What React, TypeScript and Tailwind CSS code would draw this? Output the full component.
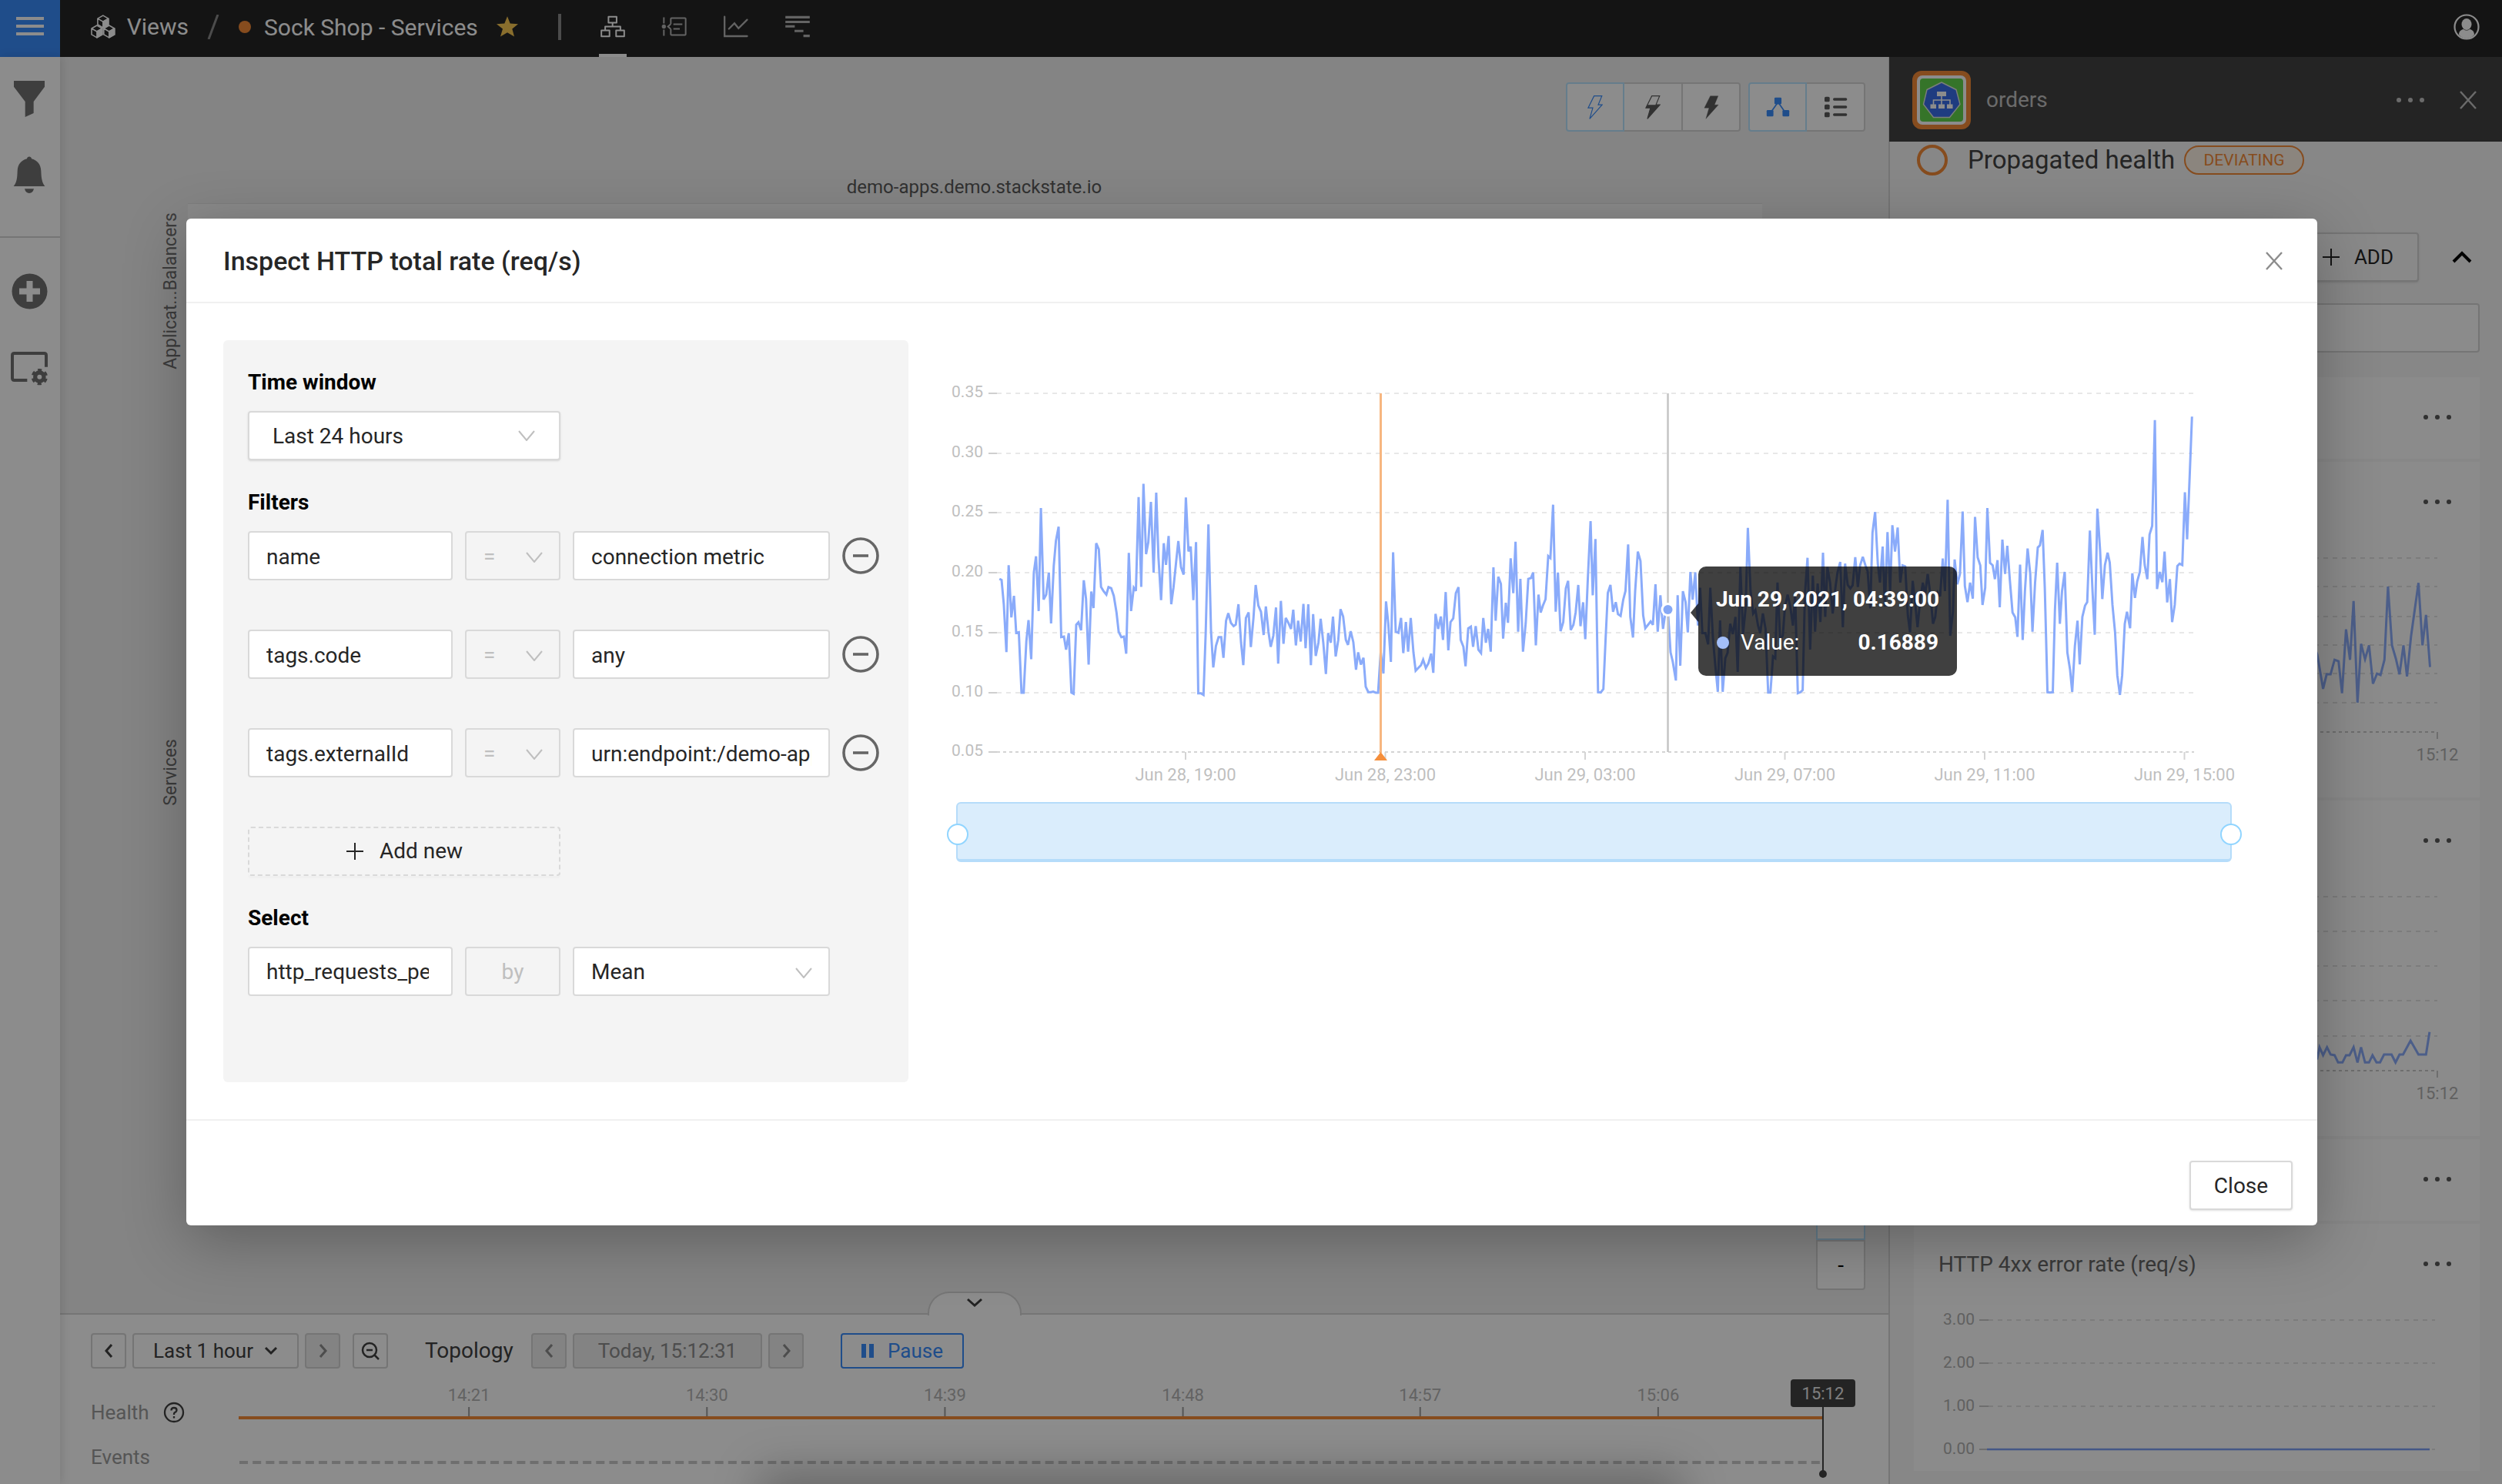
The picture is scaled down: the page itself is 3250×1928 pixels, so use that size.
import type { ReactNode } from "react";

type Transform = { sx: number; sy: number; dx: number; dy: number };

/** Turns a flat "x,y x,y" sample list into an SVG polyline string in chart space. */
function plot(samples: string, t: Transform): string {
  return samples
    .trim()
    .split(/\s+/)
    .map((pair) => {
      const [x, y] = pair.split(",").map(Number);
      return `${(x * t.sx + t.dx).toFixed(1)},${(y * t.sy + t.dy).toFixed(1)}`;
    })
    .join(" ");
}

const RATE_FIRST_HALF = `171,818 176,822 181,910 187,1084 192,768 198,958 204,880 209,1014 215,1012 221,1232 226,1232 232,1045 237,968 243,1110 249,795 254,736 260,935 265,560 271,893 277,875 283,795 288,980 294,770 299,680 305,628 311,1030 317,1028 322,1075 328,1015 334,1232 339,1236 345,985 350,976 356,1005 362,823 367,890 373,1130 379,864 384,924 390,688 396,710 401,847 407,863 413,875 418,848 424,852 430,880 436,940 441,1010 447,1030 453,1028 458,1090 464,723 469,935 475,850 480,862 486,520 492,847 497,472 503,728 508,685 514,538 520,795 526,504 531,740 537,895 543,688 548,767 554,662 560,910 565,850 571,755 576,680 582,775 588,802 593,522 599,718 604,700 610,895 616,684 621,1234 627,1234 633,1240 638,1010 644,620 650,1010 655,1140 661,1062 667,1030 673,1030 678,1105 684,970 689,943 695,978 701,990 706,984 712,910 718,1050 723,1132 729,960 735,940 740,1066 746,960 751,840 757,915 763,938 769,1022 774,918 780,1010 785,1065 791,1025 797,922 802,1126 808,898 814,1054 819,960 825,978 831,1000 836,930 842,1060 847,970 853,1046 859,909 864,1070 870,910 876,1132 881,946 887,1098 893,1050 898,963 904,1050 910,1164 915,1015 921,1050 926,955 932,1100 938,1040 943,928 949,955 955,1040 960,1058 966,1008 972,1048 978,1148 983,1085 989,1130 995,1105 1000,1210 1006,1230 1012,1230 1017,1228 1023,1232 1028,1232 1034,1084 1040,1162 1046,900 1051,980 1057,1120 1062,721 1068,1010 1074,1014 1080,960 1085,1088 1091,975 1096,1083 1102,960 1108,1085 1113,1152 1119,1142 1125,1132 1130,1112 1136,1142 1142,1125 1148,1090 1153,1160 1158,945 1164,1000 1170,955 1175,1040 1181,866 1187,1078 1192,975 1198,962 1204,870 1210,848 1215,1040 1221,1065 1226,1136 1232,998 1238,992 1243,1065 1249,990 1255,1076 1261,1088 1266,960 1272,1050 1277,1000 1283,1083 1289,776 1294,970 1300,810 1306,836 1311,1035 1317,905 1322,978 1328,743 1334,870 1339,683 1345,1010 1350,818 1356,1083 1362,980 1368,818 1374,815 1379,795 1385,1060 1391,875 1396,940 1401,915 1407,892 1413,735 1418,742 1424,548 1430,937 1435,795 1441,1008 1447,975 1453,852 1458,825 1464,1004 1470,985 1475,940 1481,840 1486,990 1492,903`;

const RATE_SECOND_HALF = `16,830 22,650 28,486 33,702 39,538 45,984 51,985 57,975 62,830 67,695 73,672 79,750 85,722 90,757 96,762 102,715 107,690 113,554 118,765 124,825 129,690 135,575 141,602 147,760 152,798 158,788 164,778 169,788 175,670 180,808 186,702 192,800 197,755 203,744 209,868 214,895 221,950 225,702 231,907 237,690 243,722 248,810 254,634 259,715 265,635 271,790 276,680 281,812 288,812 294,845 299,680 305,830 311,915 316,983 321,775 327,983 333,885 338,870 344,785 350,815 356,765 361,925 367,620 373,815 379,740 384,506 390,690 396,755 401,745 407,790 412,812 418,755 424,800 430,985 435,985 441,880 446,885 451,665 457,830 463,820 468,735 474,700 480,735 486,790 491,700 497,987 503,984 508,978 513,700 519,593 525,860 531,645 536,808 542,668 548,780 554,578 559,765 564,620 570,665 576,755 582,680 587,635 593,605 599,795 604,610 610,672 616,682 621,673 627,591 633,678 638,615 644,590 650,615 655,632 661,740 666,520 672,460 678,610 683,665 689,560 694,735 700,518 706,690 711,498 717,575 723,505 729,665 734,615 740,618 746,760 751,810 757,660 763,730 768,795 774,715 780,665 785,700 791,640 797,700 803,785 808,765 814,695 819,705 825,595 830,690 836,424 842,820 848,750 852,598 858,670 864,640 870,458 875,675 881,722 887,665 893,712 898,474 904,592 910,615 915,730 921,680 926,448 932,608 938,615 943,655 949,600 954,737 960,540 966,640 971,558 977,660 983,752 989,766 994,823 1000,613 1006,832 1011,690 1017,566 1023,640 1028,808 1034,665 1040,563 1045,557 1051,512 1056,680 1062,984 1068,985 1074,984 1079,745 1084,607 1090,785 1095,690 1101,634 1107,868 1113,918 1118,983 1124,850 1130,776 1135,903 1141,765 1147,732 1152,722 1158,514 1164,690 1169,817 1175,450 1181,570 1186,713 1192,614 1198,578 1203,607 1209,730 1215,810 1220,935 1226,992 1231,935 1237,785 1242,750 1249,798 1254,638 1260,710 1265,662 1271,634 1277,532 1282,614 1288,655 1293,525 1299,500 1305,192 1310,684 1316,634 1322,664 1327,575 1333,723 1339,655 1344,780 1350,730 1356,617 1361,610 1367,614 1373,402 1378,539 1384,350 1389,182`;

const SIDE_RATE = `1120,450 1135,400 1150,425 1163,472 1171,452 1180,452 1189,432 1198,434 1206,478 1215,390 1224,432 1232,351 1241,491 1249,410 1258,431 1267,412 1276,465 1285,451 1293,453 1302,432 1310,331 1319,412 1328,431 1336,452 1345,412 1353,455 1362,400 1379,326 1388,412 1396,370 1405,442`;

const SIDE_LATENCY = `1135,976 1150,981 1155,966 1163,977 1172,966 1180,976 1189,977 1197,987 1207,987 1215,977 1223,977 1232,966 1241,987 1249,966 1258,987 1267,987 1275,977 1284,987 1292,987 1301,976 1318,976 1327,987 1336,976 1344,976 1361,957 1379,976 1396,976 1404,945`;

const ratePoints =
  plot(RATE_FIRST_HALF, { sx: 0.574, sy: 0.3571, dx: 1200, dy: 460 }) +
  " " +
  plot(RATE_SECOND_HALF, { sx: 0.574, sy: 0.4464, dx: 2050, dy: 460 });

/* ---------- icons ---------- */

function Cube({ cx, top }: { cx: number; top: number }) {
  return (
    <g>
      <path d={`M${cx} ${top}l7 4v8l-7 4l-7-4v-8zM${cx - 7} ${top + 4}l7 4l7-4`} fill="none" stroke="#fff" strokeWidth="1.6" strokeLinejoin="round" />
      <path d={`M${cx} ${top + 8}l7-4v8l-7 4z`} fill="#fff" stroke="#fff" strokeWidth="1.6" strokeLinejoin="round" />
    </g>
  );
}

function ViewsIcon() {
  return (
    <svg width="34" height="34" viewBox="0 0 34 34" aria-hidden="true">
      <Cube cx={17} top={2} />
      <Cube cx={9} top={15} />
      <Cube cx={25} top={15} />
    </svg>
  );
}

function CloseIcon({ className }: { className: string }) {
  return (
    <svg width="24" height="24" viewBox="0 0 24 24" fill="none" stroke="currentColor" strokeWidth="2.4" className={className} aria-hidden="true">
      <path d="M2 1L22 23M22 1L2 23" />
    </svg>
  );
}

function DownIcon({ className }: { className: string }) {
  return (
    <svg width="22" height="14" viewBox="0 0 22 14" fill="none" stroke="currentColor" strokeWidth="2" className={className} aria-hidden="true">
      <path d="M1 1L11 13L21 1" />
    </svg>
  );
}

function Chevron({ d, w, h }: { d: string; w: number; h: number }) {
  return (
    <svg width={w} height={h} viewBox={`0 0 ${w} ${h}`} fill="none" stroke="currentColor" strokeWidth="3" aria-hidden="true">
      <path d={d} />
    </svg>
  );
}

const LEFT = "M10 2L3 10L10 18";
const RIGHT = "M3 2L10 10L3 18";

function PlusIcon() {
  return (
    <svg width="24" height="24" viewBox="0 0 24 24" fill="none" stroke="currentColor" strokeWidth="2" aria-hidden="true">
      <path d="M12 1V23M1 12H23" />
    </svg>
  );
}

function Dots({ className, label }: { className: string; label: string }) {
  return (
    <button type="button" aria-label={label} className={className}>
      <svg width="38" height="8" viewBox="0 0 38 8" fill="currentColor" aria-hidden="true">
        <circle cx="4" cy="4" r="3" />
        <circle cx="19" cy="4" r="3" />
        <circle cx="34" cy="4" r="3" />
      </svg>
    </button>
  );
}

function Bolt({ kind }: { kind: "empty" | "half" | "full" }) {
  return (
    <svg width="20" height="31" viewBox="95 136 58 92" aria-hidden="true">
      <path
        d="M120 138H150L136 172H151L103 226L115 184H97Z"
        fill={kind === "full" ? "currentColor" : "none"}
        stroke="currentColor"
        strokeWidth={kind === "full" ? 1 : 3.5}
      />
      {kind === "half" && <path d="M103 172H151L103 226L115 184H97Z" fill="currentColor" />}
    </svg>
  );
}

function ServiceBadge() {
  return (
    <svg width="76" height="76" viewBox="0 0 76 76" aria-hidden="true">
      <rect width="76" height="76" rx="12" fill="#f48a37" />
      <rect x="6" y="6" width="64" height="64" rx="7" fill="#fff" />
      <rect x="10" y="10" width="56" height="56" rx="4" fill="#62d34c" />
      <path d="M38 15L57 24.5L62 43.5L48.5 60.5H27.5L14.5 43.5L19 24.5Z" fill="#3a6de9" stroke="#dfe7df" strokeWidth="1.4" strokeLinejoin="round" />
      <path d="M38 32V44M27.5 44V38H49V44" fill="none" stroke="#fff" strokeWidth="1.6" />
      <path d="M32 27h12v6H32zM23.500 43.500h7.500v5.500h-7.500zM34 43.500h8v5.500h-8zM45 43.500h7.500v5.500H45z" fill="#fff" />
    </svg>
  );
}

/* ---------- background page ---------- */

function TopBar() {
  return (
    <header className="flex h-[74px] shrink-0 items-stretch bg-[#262626] text-[30px] text-white">
      <button type="button" aria-label="Menu" className="flex w-[78px] items-center justify-center bg-[#3a8cfb] pb-[6px]">
        <svg width="36" height="24" viewBox="0 0 36 24" fill="#fff" aria-hidden="true">
          <path d="M0 0h36v4H0zM0 10h36v4H0zM0 20h36v4H0z" />
        </svg>
      </button>
      <nav className="flex flex-1 items-center pb-[5px]">
        <a href="#views" className="ml-[39px] flex w-[128px] items-center gap-[14px]">
          <ViewsIcon />
          Views
        </a>
        <svg width="16" height="32" viewBox="0 0 16 32" className="ml-[24px]" stroke="#8a8a8a" strokeWidth="3" aria-hidden="true">
          <path d="M14 0L2 32" />
        </svg>
        <span className="ml-[25px] size-4 rounded-full bg-[#f48a37]" />
        <span className="ml-[17px] w-[302px] pt-[2px] whitespace-nowrap">Sock Shop - Services</span>
        <svg width="28" height="27" viewBox="78 62 84 80" fill="#f9c852" aria-hidden="true">
          <path d="M120 62L131 90L162 92L139 111L147 141L120 125L93 141L102 111L78 92L109 90Z" />
        </svg>
        <span className="ml-[52px] h-[34px] w-1 bg-[#8a8a8a]" />
        <div className="ml-[49px] flex items-center gap-[44px] pb-px text-[#b4b4b4]">
          <button type="button" aria-label="Topology" className="relative flex h-[34px] w-9 items-center justify-center text-white">
            <svg width="34" height="29" viewBox="477 58 102 88" fill="none" stroke="currentColor" strokeWidth="6" strokeLinejoin="round" aria-hidden="true">
              <path d="M511 63H543V87H511ZM483 117H515V141H483ZM541 117H573V141H541ZM527 90V102M498 114V102H558V114" />
            </svg>
            <span className="absolute -bottom-[23px] left-0 h-1 w-9 bg-white" />
          </button>
          <button type="button" aria-label="Events" className="flex w-9 justify-center">
            <svg width="34" height="27" viewBox="718 62 102 80" fill="none" stroke="currentColor" strokeWidth="6" aria-hidden="true">
              <path d="M755 92V72Q755 69 758 69H810Q813 69 813 72V132Q813 135 810 135H758Q755 135 755 132V112M755 92L744 102L755 112M728 66V90M728 114V138M765 93H800M765 111H790" />
              <circle cx="728" cy="102" r="8" fill="currentColor" stroke="none" />
            </svg>
          </button>
          <button type="button" aria-label="Metrics" className="flex w-9 justify-center">
            <svg width="34" height="29" viewBox="958 58 102 88" fill="none" stroke="currentColor" strokeWidth="7" strokeLinecap="round" aria-hidden="true">
              <path d="M964 63V140H1053M981 111L1003 89L1019 109L1053 75" />
            </svg>
          </button>
          <button type="button" aria-label="Traces" className="flex w-9 justify-center">
            <svg width="34" height="29" viewBox="1197 58 102 88" fill="currentColor" aria-hidden="true">
              <path d="M1200 60h96v10h-96zM1200 79h96v9h-96zM1200 97h37v9h-37zM1236 115h35v9h-35zM1271 134h25v10h-25z" />
            </svg>
          </button>
        </div>
        <button type="button" aria-label="Account" className="mr-[29px] ml-auto">
          <svg width="34" height="34" viewBox="0 0 34 34" aria-hidden="true">
            <circle cx="17" cy="17" r="15.500" fill="none" stroke="#fff" strokeWidth="2.200" />
            <ellipse cx="17" cy="13.500" rx="6.500" ry="7.500" fill="#fff" />
            <path d="M7 27C7 22 11 20 13 20Q17 23 21 20C23 20 27 22 27 27Q23 32 17 32T7 27Z" fill="#fff" />
          </svg>
        </button>
      </nav>
    </header>
  );
}

function SideBar() {
  return (
    <aside className="z-10 flex w-[78px] shrink-0 flex-col bg-white text-[#717171] shadow-[2px_0_12px_rgba(0,0,0,0.12)]">
      <div className="flex flex-col items-center border-b-2 border-[#d5d5d5] pt-[31px] pr-[2px] pb-[55px]">
        <button type="button" aria-label="Filters">
          <svg width="40" height="47" viewBox="54 315 120 141" fill="currentColor" aria-hidden="true">
            <path d="M54 315H174V338L131 396V441L98 456V396L54 338Z" />
          </svg>
        </button>
        <button type="button" aria-label="Notifications" className="mt-[51px]">
          <svg width="42" height="49" viewBox="51 611 126 147" fill="currentColor" aria-hidden="true">
            <path d="M53 728C66 712 67 695 68 668C69 642 84 626 105 621C106 610 122 610 123 621C144 626 159 642 160 668C161 695 163 712 175 728ZM96 738H132Q128 755 114 755T96 738Z" />
          </svg>
        </button>
      </div>
      <div className="flex flex-col items-center pt-[46px] pr-[2px]">
        <button type="button" aria-label="Add">
          <svg width="47" height="47" viewBox="0 0 47 47" aria-hidden="true">
            <circle cx="23.500" cy="23.500" r="23" fill="currentColor" />
            <path d="M23.500 10V37M10 23.500H37" stroke="#fff" strokeWidth="8" />
          </svg>
        </button>
        <button type="button" aria-label="View settings" className="mt-[55px]">
          <svg width="48" height="44" viewBox="42 1368 144 132" aria-hidden="true">
            <path d="M106 1479H56Q48 1479 48 1471V1382Q48 1374 56 1374H172Q180 1374 180 1382V1427" fill="none" stroke="currentColor" strokeWidth="12" />
            <circle cx="154" cy="1466" r="17" fill="none" stroke="currentColor" strokeWidth="16" />
            <circle cx="154" cy="1466" r="27" fill="none" stroke="currentColor" strokeWidth="10" strokeDasharray="15 13.270" strokeDashoffset="21.600" />
          </svg>
        </button>
      </div>
    </aside>
  );
}

function ToolButton({ label, active, className, children }: { label: string; active?: boolean; className: string; children: ReactNode }) {
  return (
    <button
      type="button"
      aria-label={label}
      className={`flex h-16 items-center justify-center border-2 bg-white ${active ? "border-[#b8e4ff] text-[#3a8cfb]" : "border-[#d5d5d5] text-[#595959]"} ${className}`}
    >
      {children}
    </button>
  );
}

function Canvas() {
  return (
    <section className="relative flex flex-1 flex-col bg-[#f1f1f1] pt-[33px]">
      <div className="flex justify-end gap-[10px] pr-[30px]">
        <div className="flex">
          <ToolButton label="No propagation" active className="w-[76px] rounded-l"><Bolt kind="empty" /></ToolButton>
          <ToolButton label="Partial propagation" className="w-[76px] border-l-0"><Bolt kind="half" /></ToolButton>
          <ToolButton label="Full propagation" className="w-[75px] rounded-r border-l-0"><Bolt kind="full" /></ToolButton>
        </div>
        <div className="flex">
          <ToolButton label="Graph view" active className="w-[76px] rounded-l">
            <svg width="31" height="26" viewBox="765 145 91 77" fill="currentColor" aria-hidden="true">
              <path d="M811 165L780 208M811 165L841 208" stroke="currentColor" strokeWidth="5" />
              <rect x="797" y="147" width="27" height="26" rx="4" />
              <rect x="767" y="195" width="26" height="25" rx="4" />
              <rect x="828" y="195" width="26" height="25" rx="4" />
            </svg>
          </ToolButton>
          <ToolButton label="List view" className="w-[76px] rounded-r border-l-0">
            <svg width="31" height="28" viewBox="985 141 91 84" fill="currentColor" aria-hidden="true">
              <rect x="987" y="143" width="20" height="20" rx="5" />
              <rect x="987" y="173" width="20" height="20" rx="5" />
              <rect x="987" y="203" width="20" height="20" rx="5" />
              <path d="M1025 153H1070M1025 183H1070M1025 213H1070" stroke="currentColor" strokeWidth="10" strokeLinecap="round" />
            </svg>
          </ToolButton>
        </div>
      </div>
      <h2 className="mt-[56px] mb-[5px] text-center text-[24px] leading-8 text-[#595959]">demo-apps.demo.stackstate.io</h2>
      <div className="flex flex-1">
        <div className="flex w-[166px] flex-col items-end gap-[480px] pt-3 pr-[7px] text-[23px] leading-[30px] text-[#6d6d6d]">
          <span className="rotate-180 [writing-mode:vertical-rl]">Applicat...Balancers</span>
          <span className="rotate-180 [writing-mode:vertical-rl]">Services</span>
        </div>
        <div className="mr-[164px] mb-[130px] flex-1 border-t border-[#e4e4e4] bg-[#f9f9f9]" />
      </div>
      <div className="absolute right-[30px] bottom-[30px] flex w-16 flex-col text-[28px]">
        <button type="button" aria-label="Zoom in" className="h-16 border-2 border-[#b8e4ff] bg-white">+</button>
        <button type="button" aria-label="Zoom out" className="h-[65px] rounded-b border-2 border-[#d5d5d5] bg-white">-</button>
      </div>
    </section>
  );
}

const TICKS = [
  { x: 299, label: "14:21" },
  { x: 608, label: "14:30" },
  { x: 917, label: "14:39" },
  { x: 1226, label: "14:48" },
  { x: 1534, label: "14:57" },
  { x: 1843, label: "15:06" },
];

function Timeline() {
  const box = "flex h-[46px] items-center justify-center rounded border-2 border-[#d5d5d5]";
  return (
    <section className="relative h-[222px] shrink-0 border-t-2 border-[#d5d5d5] bg-white text-[26px] text-[#404040]">
      <button type="button" aria-label="Collapse timeline" className="absolute -top-[30px] left-1/2 flex h-[31px] w-[122px] -translate-x-1/2 items-center justify-center rounded-t-[28px] border-2 border-b-0 border-[#d5d5d5] bg-white pb-1">
        <Chevron d="M2 2L11 10L20 2" w={22} h={13} />
      </button>
      <div className="flex pt-6 pl-10">
        <button type="button" aria-label="Earlier" className={`${box} w-[46px]`}><Chevron d={LEFT} w={13} h={20} /></button>
        <button type="button" className={`${box} ml-2 w-[216px] gap-[14px]`}>
          Last 1 hour
          <Chevron d="M2 2L9 9L16 2" w={18} h={12} />
        </button>
        <button type="button" aria-label="Later" disabled className={`${box} ml-2 w-[46px] bg-[#eee] text-[#8c8c8c]`}><Chevron d={RIGHT} w={13} h={20} /></button>
        <button type="button" aria-label="Zoom out timeline" className={`${box} ml-4 w-[46px]`}>
          <svg width="24" height="24" viewBox="0 0 24 24" fill="none" stroke="currentColor" strokeWidth="2.500" aria-hidden="true">
            <circle cx="11" cy="11" r="9" />
            <path d="M17 17L23 23M7 11H15" />
          </svg>
        </button>
        <span className="ml-12 w-[138px] text-[28px] leading-[46px]">Topology</span>
        <button type="button" aria-label="Previous topology" disabled className={`${box} w-[46px] bg-[#eee] text-[#8c8c8c]`}><Chevron d={LEFT} w={13} h={20} /></button>
        <button type="button" disabled className={`${box} ml-2 w-[246px] bg-[#eee] text-[#8c8c8c]`}>Today, 15:12:31</button>
        <button type="button" aria-label="Next topology" disabled className={`${box} ml-2 w-[46px] bg-[#eee] text-[#8c8c8c]`}><Chevron d={RIGHT} w={13} h={20} /></button>
        <button type="button" className="ml-12 flex h-[46px] w-[160px] items-center justify-center gap-[18px] rounded border-2 border-[#3a8cfb] text-[#3a8cfb]">
          <svg width="16" height="18" viewBox="0 0 16 18" fill="currentColor" aria-hidden="true">
            <path d="M0 0h6v18H0zM10 0h6v18h-6z" />
          </svg>
          Pause
        </button>
      </div>
      <div className="mt-3 flex pl-10 text-[#9c9c9c]">
        <div className="w-[192px] shrink-0 pt-[26px] leading-[38px]">
          <div className="flex items-center">
            <span className="w-[94px]">Health</span>
            <svg width="28" height="28" viewBox="0 0 28 28" fill="none" stroke="#404040" strokeWidth="2.300" role="img" aria-label="Help">
              <circle cx="14" cy="14" r="12" />
              <path d="M10.500 11.500Q10.500 8 14 8T17.500 11Q17.500 13 14.500 14.500Q14 15 14 17M14 19V21.500" />
            </svg>
          </div>
          <div className="mt-5">Events</div>
        </div>
        <svg viewBox="0 0 2100 136" className="mr-[42px] w-full min-w-0 flex-1" fontSize="22" aria-hidden="true">
          {TICKS.map((t) => (
            <g key={t.label}>
              <text x={t.x} y="30" textAnchor="middle" fill="#b4b4b4">{t.label}</text>
              <path d={`M${t.x} 38V50`} stroke="#9c9c9c" strokeWidth="2" />
            </g>
          ))}
          <path d="M0 52H2057" stroke="#f48a37" strokeWidth="4" />
          <path d="M1 110H2054" stroke="#c8c8c8" strokeWidth="4" strokeDasharray="11 6.150" />
          <path d="M2057 38V124" stroke="#434343" strokeWidth="2" />
          <circle cx="2057" cy="125" r="5" fill="#434343" />
          <rect x="2015" y="2" width="84" height="36" rx="4" fill="#434343" />
          <text x="2057" y="28" textAnchor="middle" fill="#e8e8e8">15:12</text>
        </svg>
      </div>
    </section>
  );
}

function Card({ title, className, children }: { title?: string; className: string; children?: ReactNode }) {
  return (
    <article className={`bg-[#fdfdfd] ${className}`}>
      <div className="flex h-[104px] items-center justify-between pr-9 pl-8">
        <h3 className="pt-[2px] text-[28px] text-[#6a6a6a]">{title}</h3>
        <Dots label="More" className="text-[#595959]" />
      </div>
      {children}
    </article>
  );
}

function SmallGrid({ rows, axis }: { rows: number[]; axis: number }) {
  return (
    <>
      {rows.map((y) => (
        <path key={y} d={`M40 ${y}H680`} stroke="#e2e2e2" strokeWidth="2" strokeDasharray="6 6" />
      ))}
      <path d={`M40 ${axis}H680`} stroke="#c8c8c8" strokeWidth="2" strokeDasharray="4 4" />
      <path d={`M680 ${axis}v9`} stroke="#c8c8c8" strokeWidth="2" />
      <text x="680" y="284" textAnchor="middle" fill="#b0b0b0" fontSize="22">15:12</text>
    </>
  );
}

function DetailsPanel() {
  return (
    <aside className="flex w-[797px] shrink-0 flex-col border-l-2 border-[#d5d5d5] bg-[#f6f6f6]">
      <div className="-ml-px flex h-[110px] shrink-0 items-center bg-[#434343] pt-[2px] pl-[30px] text-[28px] text-[#c4c4c4]">
        <ServiceBadge />
        <h2 className="ml-5">orders</h2>
        <Dots label="More actions" className="mr-[44px] ml-auto" />
        <button type="button" aria-label="Close panel" className="mr-[32px]"><CloseIcon className="block" /></button>
      </div>
      <div className="flex flex-col pt-[2px] pr-[29px] pl-[31px]">
        <div className="flex h-11 items-center pl-1">
          <span className="size-10 rounded-full border-4 border-[#f48a37]" />
          <h3 className="ml-[26px] w-[281px] text-[33px] leading-[44px] whitespace-nowrap text-[#434343]">Propagated health</h3>
          <span className="flex h-[38px] w-[156px] items-center justify-center rounded-full border-2 border-[#f48a37] bg-[#fdf3e6] pt-[2px] text-[21px] text-[#f48a37]">DEVIATING</span>
        </div>
        <div className="mt-[72px] flex items-center justify-end pr-[10px]">
          <button type="button" className="flex h-16 items-center gap-[18px] rounded border-2 border-[#d5d5d5] bg-[#fafafa] px-[31px] text-[26px] text-[#262626] shadow-sm"><PlusIcon />ADD</button>
          <button type="button" aria-label="Collapse" className="ml-[43px] text-black">
            <svg width="26" height="16" viewBox="0 0 26 16" fill="none" stroke="currentColor" strokeWidth="4" aria-hidden="true"><path d="M2 14L13 3L24 14" /></svg>
          </button>
        </div>
        <input aria-label="Search streams" className="mt-7 h-16 rounded border-2 border-[#d5d5d5] bg-[#fdfdfd]" />
        <div className="mt-8 flex flex-col gap-1">
          <Card className="h-[106px]" />
          <Card className="h-[436px]">
            <svg viewBox="0 0 735 332" className="block w-full" aria-hidden="true">
              <SmallGrid rows={[21, 58, 97, 134, 171, 209]} axis={247} />
              <polyline points={plot(SIDE_RATE, { sx: 0.574, sy: 0.9426, dx: -136, dy: -254 })} fill="none" stroke="#8aabfa" strokeWidth="3" />
            </svg>
          </Card>
          <Card className="h-[436px]">
            <svg viewBox="0 0 735 332" className="block w-full" aria-hidden="true">
              <SmallGrid rows={[21, 66, 111, 156, 202]} axis={247} />
              <polyline points={plot(SIDE_LATENCY, { sx: 0.574, sy: 0.9426, dx: -136, dy: -694 })} fill="none" stroke="#8aabfa" strokeWidth="3" />
            </svg>
          </Card>
          <Card className="h-[106px]" />
          <Card title="HTTP 4xx error rate (req/s)" className="h-[321px]">
            <svg viewBox="0 0 735 217" className="block w-full" fontSize="21" aria-hidden="true">
              {["3.00", "2.00", "1.00", "0.00"].map((label, i) => (
                <g key={label}>
                  <text x="79" y={27 + i * 56} textAnchor="end" fill="#b0b0b0">{label}</text>
                  <path d={`M85 ${21 + i * 56}h12`} stroke="#c8c8c8" strokeWidth="2" />
                  <path d={`M97 ${21 + i * 56}H677`} stroke="#e2e2e2" strokeWidth="2" strokeDasharray="6 6" />
                </g>
              ))}
              <path d="M95 189H670" stroke="#7c9ff5" strokeWidth="2.500" />
            </svg>
          </Card>
        </div>
      </div>
    </aside>
  );
}

/* ---------- dialog ---------- */

const FILTERS = [
  { key: "name", value: "connection metric" },
  { key: "tags.code", value: "any" },
  { key: "tags.externalId", value: "urn:endpoint:/demo-app-shared:orders" },
];

const field = "h-16 rounded border-2 border-[#d9d9d9] pt-[2px] text-[28px]";
const heading = "mb-[17px] leading-10 font-bold text-black";

function FilterForm() {
  return (
    <form className="flex w-[890px] shrink-0 flex-col items-start rounded-md bg-[#f4f4f4] px-8 pt-[35px] pb-28 text-[28px] text-[#262626]">
      <label htmlFor="window" className={heading}>Time window</label>
      <div className="relative">
        <select id="window" defaultValue="24h" className={`${field} w-[406px] appearance-none bg-white pl-[30px] shadow-sm`}>
          <option value="24h">Last 24 hours</option>
        </select>
        <DownIcon className="pointer-events-none absolute top-[25px] right-[33px] text-[#bfbfbf]" />
      </div>
      <h3 className={`mt-[35px] ${heading}`}>Filters</h3>
      <div className="flex flex-col gap-16">
        {FILTERS.map((f) => (
          <div key={f.key} className="flex items-center gap-4">
            <input aria-label="Filter key" defaultValue={f.key} className={`${field} w-[266px] bg-white px-[22px]`} />
            <div className="relative">
              <select aria-label="Operator" disabled defaultValue="=" className={`${field} w-[124px] appearance-none bg-[#f4f4f4] pl-[22px] text-[#bfbfbf] opacity-100`}>
                <option>=</option>
              </select>
              <DownIcon className="pointer-events-none absolute top-[27px] right-[23px] text-[#bfbfbf]" />
            </div>
            <input aria-label="Filter value" defaultValue={f.value} className={`${field} w-[334px] bg-white px-[22px]`} />
            <button type="button" aria-label={`Remove ${f.key}`} className="text-[#666]">
              <svg width="48" height="48" viewBox="1 1 48 48" fill="none" stroke="currentColor" strokeWidth="3.600" className="block" aria-hidden="true">
                <circle cx="25" cy="25" r="22" />
                <path d="M15 25H35" />
              </svg>
            </button>
          </div>
        ))}
      </div>
      <button type="button" className="mt-16 flex h-16 w-[406px] items-center justify-center gap-[20px] rounded border-2 border-dashed border-[#d9d9d9] shadow-[0_3px_0_rgba(0,0,0,0.015)]">
        <PlusIcon />
        Add new
      </button>
      <label htmlFor="metric" className={`mt-[35px] ${heading}`}>Select</label>
      <div className="flex items-center gap-4">
        <div className={`${field} flex w-[266px] bg-white px-[22px]`}>
          <input id="metric" defaultValue="http_requests_per_second" className="w-[211px] outline-none" />
        </div>
        <span className={`${field} flex w-[124px] items-center justify-center text-[#bfbfbf]`}>by</span>
        <div className="relative">
          <select aria-label="Aggregation" defaultValue="Mean" className={`${field} w-[334px] appearance-none bg-white pl-[22px]`}>
            <option>Mean</option>
          </select>
          <DownIcon className="pointer-events-none absolute top-[27px] right-[23px] text-[#bfbfbf]" />
        </div>
      </div>
    </form>
  );
}

const Y_LABELS = ["0.35", "0.30", "0.25", "0.20", "0.15", "0.10", "0.05"];
const X_LABELS = ["Jun 28, 19:00", "Jun 28, 23:00", "Jun 29, 03:00", "Jun 29, 07:00", "Jun 29, 11:00", "Jun 29, 15:00"];
const thumb =
  "[&::-webkit-slider-thumb]:pointer-events-auto [&::-webkit-slider-thumb]:size-7 [&::-webkit-slider-thumb]:appearance-none [&::-webkit-slider-thumb]:rounded-full [&::-webkit-slider-thumb]:border-2 [&::-webkit-slider-thumb]:border-[#91d5ff] [&::-webkit-slider-thumb]:bg-white";

function RateChart() {
  return (
    <div className="relative ml-12 min-w-0 flex-1">
      <svg viewBox="1228 442 1734 586" className="block w-full" fontSize="21" role="img" aria-label="HTTP total rate">
        {Y_LABELS.map((label, i) => {
          const y = 511 + Math.round(i * 77.7);
          return (
            <g key={label}>
              <text x="1277" y={y + 5} textAnchor="end" fill="#bfbfbf">{label}</text>
              <path d={`M1284 ${y}h11`} stroke="#cfcfcf" strokeWidth="2" />
              <path d={`M1295 ${y}H2850`} stroke={i === 6 ? "#d4d4d4" : "#e8e8e8"} strokeWidth="2" strokeDasharray={i === 6 ? "4 4" : "6 6"} />
            </g>
          );
        })}
        {X_LABELS.map((label, i) => {
          const x = 1540 + i * 259.5;
          return (
            <g key={label}>
              <path d={`M${x} 977v10`} stroke="#d4d4d4" strokeWidth="2" />
              <text x={x} y="1014" textAnchor="middle" fill="#bfbfbf" fontSize="22">{label}</text>
            </g>
          );
        })}
        <polyline points={ratePoints} fill="none" stroke="#8aabfa" strokeWidth="3" strokeLinejoin="miter" strokeMiterlimit="3" />
        <path d="M1793.500 511V978" stroke="#f7b680" strokeWidth="3" />
        <path d="M1785 988L1793.500 977L1802 988Z" fill="#f58f3c" />
        <path d="M2166.500 511V977" stroke="#c4c4c4" strokeWidth="2.500" />
        <circle cx="2166.500" cy="792" r="9" fill="#fff" />
        <circle cx="2166.500" cy="792" r="6" fill="#86a8f5" />
      </svg>
      <div role="tooltip" className="absolute top-[294px] left-[978px] w-[336px] rounded-[10px] bg-black/75 px-6 pt-[28px] pb-[28px] text-[28px] leading-[30px] text-white">
        <svg width="10" height="24" viewBox="0 0 10 24" fill="black" fillOpacity="0.750" className="absolute top-[48px] -left-[10px]" aria-hidden="true">
          <path d="M10 0V24L0 12Z" />
        </svg>
        <div className="-mx-2 text-center font-bold whitespace-nowrap">Jun 29, 2021, 04:39:00</div>
        <div className="mt-[26px] flex items-center">
          <span className="mr-[15px] size-4 rounded-full bg-[#a3bffa]" />
          <span>Value:</span>
          <b className="ml-auto font-bold">0.16889</b>
        </div>
      </div>
      <div className="relative mt-[14px] mr-[63px] ml-[14px] h-[78px] rounded-md border-2 border-b-4 border-[#b5dcfa] bg-[#daedfc]">
        <input type="range" aria-label="Range start" defaultValue={0} className={`pointer-events-none absolute inset-y-0 -left-[14px] h-[76px] w-[calc(100%+29px)] appearance-none bg-transparent pt-1 ${thumb}`} />
        <input type="range" aria-label="Range end" defaultValue={100} className={`pointer-events-none absolute inset-y-0 -left-[14px] h-[76px] w-[calc(100%+29px)] appearance-none bg-transparent pt-1 ${thumb}`} />
      </div>
    </div>
  );
}

function InspectDialog() {
  return (
    <div className="absolute inset-0 z-20 bg-black/45 pt-[284px] pr-[240px] pl-[242px]">
      <div role="dialog" aria-label="Inspect HTTP total rate" className="rounded-md bg-white shadow-[0_20px_80px_rgba(0,0,0,0.28)]">
        <div className="flex h-[110px] items-center justify-between border-b-2 border-[#f0f0f0] pt-[2px] pr-11 pl-12">
          <h1 className="text-[34px] font-medium text-[#262626]">Inspect HTTP total rate (req/s)</h1>
          <button type="button" aria-label="Close dialog"><CloseIcon className="block text-[#8c8c8c]" /></button>
        </div>
        <div className="flex p-12">
          <FilterForm />
          <RateChart />
        </div>
        <div className="flex justify-end border-t-2 border-[#f0f0f0] pt-[52px] pr-8 pb-5">
          <button type="button" className="h-16 w-[134px] rounded border-2 border-[#d9d9d9] bg-white pt-[2px] text-[28px] text-[#262626] shadow-sm">Close</button>
        </div>
      </div>
    </div>
  );
}

export default function App() {
  return (
    <div className="relative flex h-screen flex-col overflow-hidden bg-white font-[Roboto,sans-serif]">
      <TopBar />
      <div className="flex min-h-0 flex-1">
        <SideBar />
        <main className="flex min-w-0 flex-1 flex-col">
          <Canvas />
          <Timeline />
        </main>
        <DetailsPanel />
      </div>
      <div className="absolute top-full right-[1080px] left-[1000px] h-10 shadow-[0_0_60px_14px_rgba(0,0,0,0.28)]" />
      <InspectDialog />
    </div>
  );
}
